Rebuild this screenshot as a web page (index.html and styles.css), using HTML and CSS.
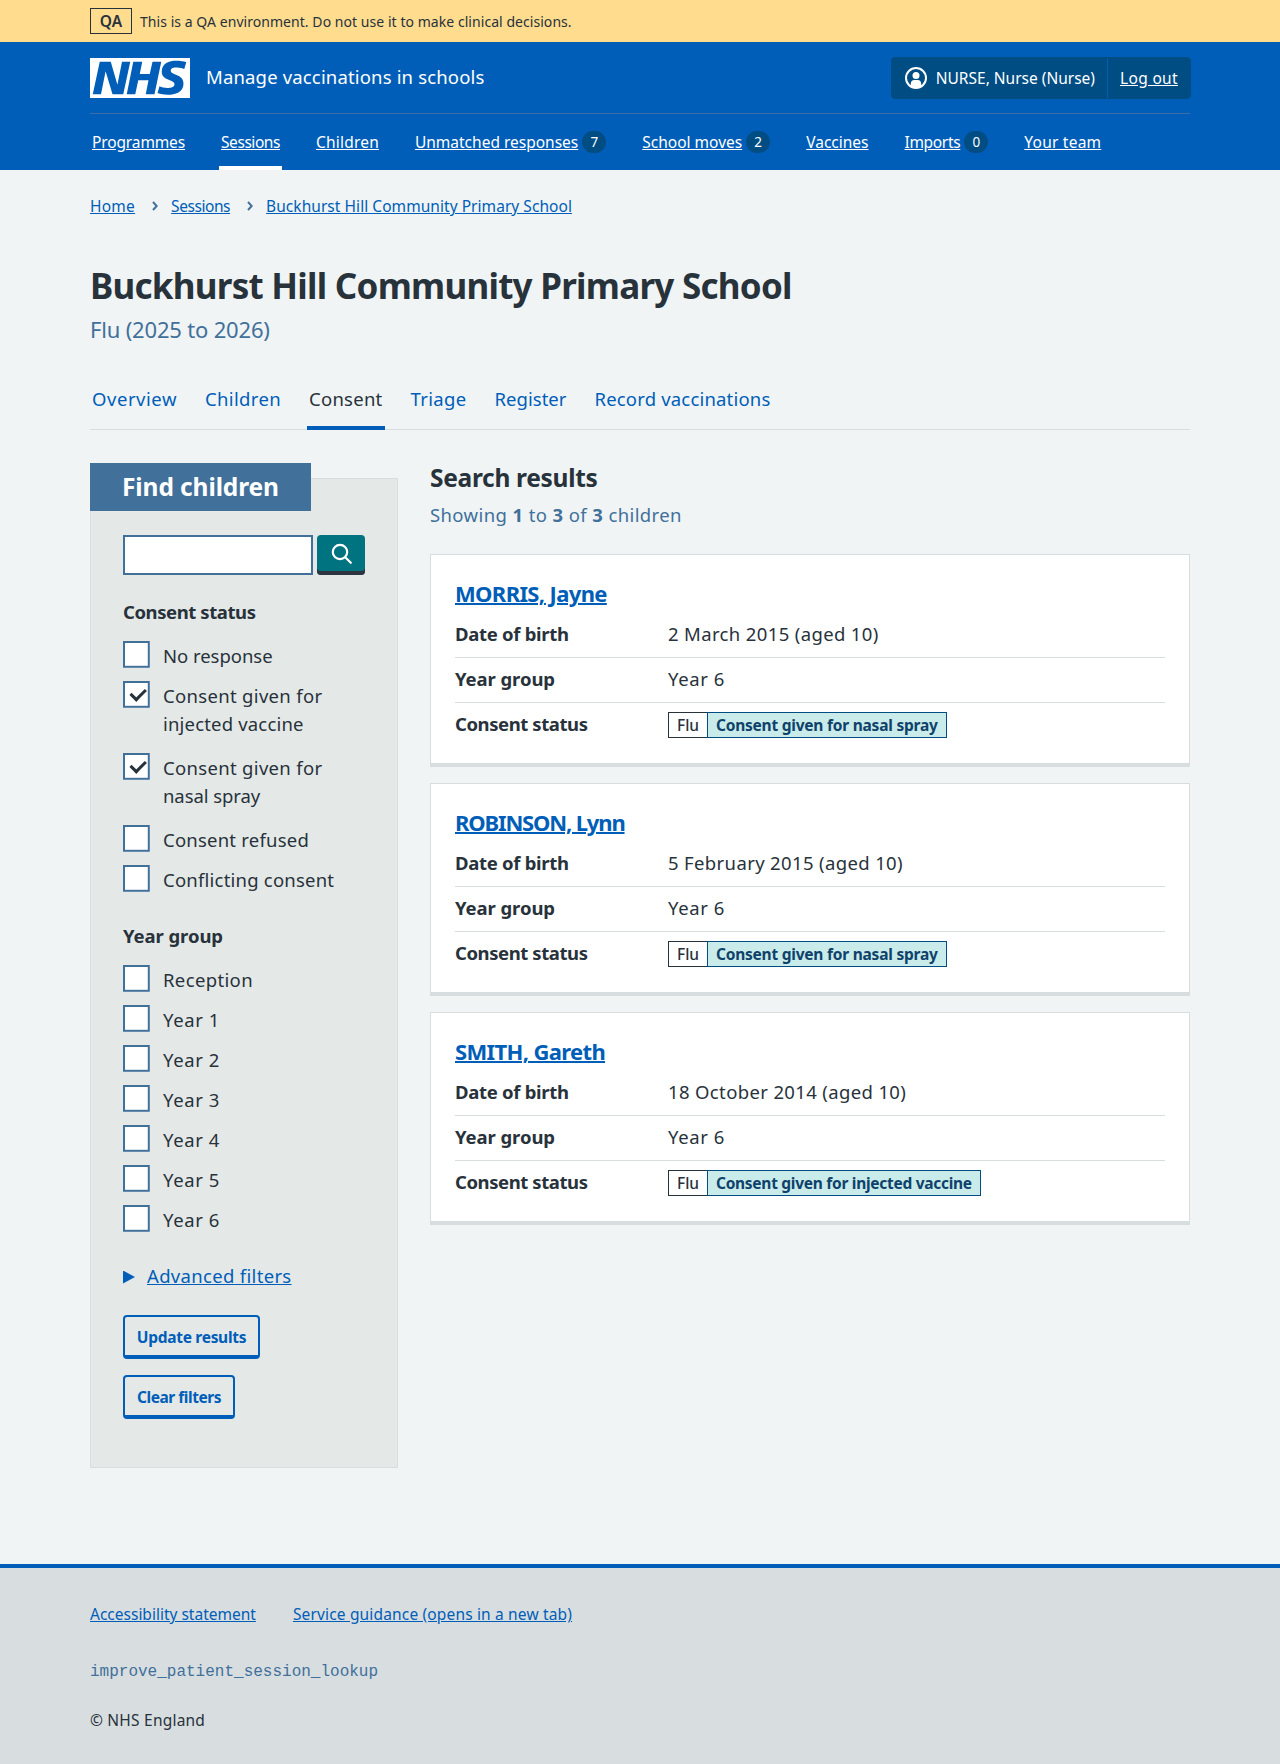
FILE: index.html
```html
<!DOCTYPE html>
<html lang="en">
<head>
<meta charset="utf-8">
<title>Buckhurst Hill Community Primary School – Manage vaccinations in schools</title>
<link rel="stylesheet" href="styles.css">
</head>
<body>
<div class="environment">
  <div class="container environment__inner">
    <strong class="environment__tag">QA</strong>
    <span class="environment__text">This is a QA environment. Do not use it to make clinical decisions.</span>
  </div>
</div>

<header class="header">
  <div class="container">
    <div class="header__top">
      <a class="header__service" href="#">
        <svg class="header__logo" viewBox="0 0 40 16" role="img" aria-label="NHS"><path fill="#fff" d="M0 0h40v16H0z"/><path fill="#005eb8" d="M3.9 1.5h4.4l2.6 9h.1l1.8-9h3.3l-2.8 13H9l-2.7-9h-.1l-1.8 9H1.1M17.3 1.5h3.6l-1 4.9h4L25 1.5h3.5l-2.7 13h-3.5l1.1-5.6h-4.1l-1.2 5.6h-3.4M37.7 4.4c-.7-.3-1.6-.6-2.9-.6-1.4 0-2.5.2-2.5 1.3 0 1.8 5.1 1.2 5.1 5.1 0 3.6-3.3 4.5-6.4 4.5-1.3 0-2.9-.3-4-.7l.8-2.7c.7.4 2.1.7 3.2.7s2.8-.2 2.8-1.5c0-2.1-5.1-1.3-5.1-5 0-3.4 2.9-4.4 5.8-4.4 1.6 0 3.1.2 4 .6"/></svg>
        <span class="header__name">Manage vaccinations in schools</span>
      </a>
      <div class="account">
        <div class="account__user">
          <svg class="account__icon" viewBox="0 0 22 22" aria-hidden="true"><circle cx="11" cy="11" r="10" fill="none" stroke="#fff" stroke-width="2"/><circle cx="11" cy="8.4" r="3.5" fill="#fff"/><path fill="#fff" d="M5.8 19.2v-2.4c0-2.3 1.4-3.8 3.4-3.8h3.6c2 0 3.4 1.5 3.4 3.8v2.4c-1.5 1.2-3.3 1.8-5.2 1.8s-3.7-.6-5.2-1.8z"/></svg>
          <span>NURSE, Nurse (Nurse)</span>
        </div>
        <a class="account__logout" href="#">Log out</a>
      </div>
    </div>
    <nav class="nav">
      <div class="nav__item nav__item--programmes"><a href="#">Programmes</a></div>
      <div class="nav__item nav__item--current"><a href="#">Sessions</a></div>
      <div class="nav__item nav__item--children"><a href="#">Children</a></div>
      <div class="nav__item"><a href="#">Unmatched responses</a><span class="nav__count">7</span></div>
      <div class="nav__item"><a href="#">School moves</a><span class="nav__count">2</span></div>
      <div class="nav__item"><a href="#">Vaccines</a></div>
      <div class="nav__item nav__item--imports"><a href="#">Imports</a><span class="nav__count">0</span></div>
      <div class="nav__item nav__item--team"><a href="#">Your team</a></div>
    </nav>
  </div>
</header>

<main class="container main">
  <nav class="breadcrumb">
    <a class="breadcrumb__home" href="#">Home</a>
    <svg class="breadcrumb__chevron" viewBox="0 0 6 10" aria-hidden="true"><path d="M1 1l3.7 4L1 9"/></svg>
    <a class="breadcrumb__sessions" href="#">Sessions</a>
    <svg class="breadcrumb__chevron" viewBox="0 0 6 10" aria-hidden="true"><path d="M1 1l3.7 4L1 9"/></svg>
    <a class="breadcrumb__school" href="#">Buckhurst Hill Community Primary School</a>
  </nav>

  <h1 class="title">Buckhurst Hill Community Primary School</h1>
  <p class="caption">Flu (2025 to 2026)</p>

  <nav class="tabs">
    <a class="tabs__item tabs__item--overview" href="#">Overview</a>
    <a class="tabs__item" href="#">Children</a>
    <a class="tabs__item tabs__item--current" href="#">Consent</a>
    <a class="tabs__item" href="#">Triage</a>
    <a class="tabs__item tabs__item--register" href="#">Register</a>
    <a class="tabs__item tabs__item--record" href="#">Record vaccinations</a>
  </nav>

  <div class="columns">
    <form class="filters">
      <h2 class="filters__title">Find children</h2>
      <div class="search">
        <input class="search__input" type="text" aria-label="Search">
        <button class="search__button" type="button" aria-label="Search">
          <svg viewBox="0 0 22 22" aria-hidden="true"><circle cx="9" cy="9" r="7.2"/><path d="M14.2 14.2l5.6 5.6"/></svg>
        </button>
      </div>

      <h3 class="filters__legend">Consent status</h3>
      <div class="options">
        <label class="option option--tight"><span class="option__box"></span>No response</label>
        <label class="option option--wrapped"><span class="option__box option__box--checked"></span>Consent given for <span class="option__tail">injected vaccine</span></label>
        <label class="option option--wrapped"><span class="option__box option__box--checked"></span>Consent given for <span class="option__tail option__tail--tight">nasal spray</span></label>
        <label class="option"><span class="option__box"></span>Consent refused</label>
        <label class="option"><span class="option__box"></span>Conflicting consent</label>
      </div>

      <h3 class="filters__legend filters__legend--next">Year group</h3>
      <div class="options options--years">
        <label class="option"><span class="option__box"></span>Reception</label>
        <label class="option"><span class="option__box"></span>Year 1</label>
        <label class="option"><span class="option__box"></span>Year 2</label>
        <label class="option"><span class="option__box"></span>Year 3</label>
        <label class="option"><span class="option__box"></span>Year 4</label>
        <label class="option"><span class="option__box"></span>Year 5</label>
        <label class="option"><span class="option__box"></span>Year 6</label>
      </div>

      <div class="advanced"><span class="advanced__arrow"></span><a href="#">Advanced filters</a></div>
      <div class="actions">
        <button class="button" type="button">Update results</button>
        <button class="button button--clear" type="button">Clear filters</button>
      </div>
    </form>

    <section class="results">
      <h2 class="results__title">Search results</h2>
      <p class="results__count">Showing <b>1</b> to <b>3</b> of <b>3</b> children</p>

      <article class="card">
        <h3 class="card__name"><a href="#">MORRIS, Jayne</a></h3>
        <dl class="summary">
          <div class="summary__row"><dt>Date of birth</dt><dd>2 March 2015 (aged 10)</dd></div>
          <div class="summary__row"><dt>Year group</dt><dd>Year 6</dd></div>
          <div class="summary__row"><dt>Consent status</dt><dd class="status"><span class="status__programme">Flu</span><span class="status__value">Consent given for nasal spray</span></dd></div>
        </dl>
      </article>

      <article class="card">
        <h3 class="card__name card__name--tight"><a href="#">ROBINSON, Lynn</a></h3>
        <dl class="summary">
          <div class="summary__row"><dt>Date of birth</dt><dd>5 February 2015 (aged 10)</dd></div>
          <div class="summary__row"><dt>Year group</dt><dd>Year 6</dd></div>
          <div class="summary__row"><dt>Consent status</dt><dd class="status"><span class="status__programme">Flu</span><span class="status__value">Consent given for nasal spray</span></dd></div>
        </dl>
      </article>

      <article class="card">
        <h3 class="card__name"><a href="#">SMITH, Gareth</a></h3>
        <dl class="summary">
          <div class="summary__row"><dt>Date of birth</dt><dd>18 October 2014 (aged 10)</dd></div>
          <div class="summary__row"><dt>Year group</dt><dd>Year 6</dd></div>
          <div class="summary__row"><dt>Consent status</dt><dd class="status"><span class="status__programme">Flu</span><span class="status__value status__value--injected">Consent given for injected vaccine</span></dd></div>
        </dl>
      </article>
    </section>
  </div>
</main>

<footer class="footer">
  <div class="container">
    <div class="footer__links">
      <a href="#">Accessibility statement</a>
      <a class="footer__guidance" href="#">Service guidance (opens in a new tab)</a>
    </div>
    <div class="footer__branch">improve_patient_session_lookup</div>
    <div class="footer__copyright">© NHS England</div>
  </div>
</footer>
</body>
</html>
```
FILE: styles.css
```css
:root {
  --blue: #005eb8;
  --dark-blue: #004d84;
  --text: #28323b;
  --secondary: #41709a;
  --border: #d8dde0;
}

* { box-sizing: border-box; }

body {
  margin: 0;
  background: #f0f4f5;
  color: var(--text);
  font: 400 18.5px/28px "Noto Sans", sans-serif;
  letter-spacing: .22px;
}

h1, h2, h3, p, dl, dd { margin: 0; }
h1, h2, h3, dt, b { font-weight: 700; }
a { color: var(--blue); }

.container { width: 1100px; margin: 0 auto; }

/* Environment banner */
.environment { background: #ffdc8e; }
.environment__inner { display: flex; align-items: center; gap: 8px; height: 42px; }
.environment__tag {
  width: 42px;
  height: 26px;
  border: 1px solid var(--text);
  font-size: 15.5px;
  font-weight: 600;
  line-height: 24px;
  text-align: center;
}
.environment__text { padding-top: 1px; font-size: 14px; line-height: 20px; letter-spacing: .05px; }

/* Header */
.header { background: var(--blue); color: #fff; font-size: 15.5px; line-height: 24px; letter-spacing: 0; }
.header a { color: #fff; }
.header__top {
  display: flex;
  justify-content: space-between;
  align-items: center;
  height: 72px;
  border-bottom: 1px solid #3a6ea5;
}
.header__service { display: flex; align-items: center; gap: 16px; padding-top: 1px; text-decoration: none; }
.header__logo { display: block; width: 100px; height: 40px; }
.header__name { padding-bottom: 2px; font-size: 18.5px; letter-spacing: .16px; }
.account {
  display: flex;
  height: 42px;
  margin: 1px -1px 0 0;
  border: 1px solid var(--dark-blue);
  border-radius: 4px;
  background: var(--dark-blue);
  line-height: 40px;
}
.account__user { display: flex; align-items: center; gap: 9px; padding: 0 12px 0 13px; }
.account__icon { width: 22px; height: 22px; }
.account__logout { width: 83px; padding-left: 12px; border-left: 1px solid var(--blue); letter-spacing: .33px; }

.nav { display: flex; gap: 32px; height: 56px; }
.nav__item { display: flex; align-items: center; gap: 4px; padding: 0 2px; }
.nav__item--programmes { letter-spacing: -.13px; }
.nav__item--current { box-shadow: inset 0 -4px #fff; letter-spacing: -.44px; }
.nav__item--children { letter-spacing: .2px; }
.nav__item--imports { letter-spacing: -.33px; }
.nav__item--team { letter-spacing: .23px; }
.nav__count {
  width: 24px;
  height: 22px;
  border-radius: 11px;
  background: var(--dark-blue);
  font-size: 13.5px;
  line-height: 22px;
  letter-spacing: 0;
  text-align: center;
}

/* Page heading */
.main { padding-bottom: 96px; }
.breadcrumb { display: flex; align-items: center; padding-top: 24px; font-size: 15.5px; line-height: 24px; letter-spacing: 0; }
.breadcrumb__home { letter-spacing: .25px; }
.breadcrumb__sessions { letter-spacing: -.44px; }
.breadcrumb__school { letter-spacing: .05px; }
.breadcrumb__chevron { width: 6px; height: 10px; margin: 0 13px 0 17px; fill: none; stroke: var(--secondary); stroke-width: 2; }
.title { margin-top: 48px; font-size: 35px; line-height: 40px; letter-spacing: -.745px; }
.caption { margin-top: 7px; color: var(--secondary); font-size: 22px; line-height: 32px; letter-spacing: -.18px; }

.tabs { display: flex; gap: 24px; height: 46px; margin-top: 39px; box-shadow: inset 0 -1px var(--border); }
.tabs__item { padding: 1px 2px 0; letter-spacing: .35px; text-decoration: none; }
.tabs__item--overview { letter-spacing: .54px; }
.tabs__item--register { letter-spacing: .02px; }
.tabs__item--record { letter-spacing: .18px; }
.tabs__item--current { color: var(--text); box-shadow: inset 0 -4px var(--blue); letter-spacing: .25px; }

.columns { display: grid; grid-template-columns: 308px 760px; gap: 32px; align-items: start; padding-top: 32px; }

/* Filter panel */
.filters {
  margin-top: 16px;
  padding: 0 32px 48px;
  border: 1px solid var(--border);
  background: #e4e9e8;
}
.filters__title {
  width: 221px;
  height: 48px;
  margin: -16px 0 24px -33px;
  padding-left: 32px;
  background: var(--secondary);
  color: #fff;
  font-size: 24.5px;
  line-height: 48px;
  letter-spacing: -.1px;
}
.search { display: flex; gap: 4px; height: 40px; }
.search__input { width: 190px; height: 40px; padding: 0 8px; border: 2px solid var(--secondary); border-radius: 0; background: #fff; }
.search__button {
  width: 48px;
  height: 40px;
  padding: 0 0 2px 1px;
  border: 0;
  border-radius: 4px;
  background: #007380;
  box-shadow: inset 0 -4px #2f3540;
  line-height: 0;
}
.search__button svg { width: 22px; height: 22px; fill: none; stroke: #fff; stroke-width: 2.2; stroke-linecap: round; }
.filters__legend { margin: 22.6px 0 16px; font-size: 18.5px; line-height: 28px; letter-spacing: -.42px; }
.filters__legend--next { margin-top: 16px; letter-spacing: -.08px; }
.option { position: relative; display: block; min-height: 40px; padding: 0 20px 0 40px; }
.option--wrapped { min-height: 72px; letter-spacing: .32px; }
.option--tight { letter-spacing: -.03px; }
.option__tail { letter-spacing: .18px; }
.option__tail--tight { letter-spacing: -.08px; }
.options--years { letter-spacing: .36px; }
.options--years .option + .option { letter-spacing: .6px; }
.option__box {
  position: absolute;
  top: -.4px;
  left: 0;
  width: 40px;
  height: 40px;
  border: 3px solid var(--secondary);
  background: #fff;
  transform: scale(.67);
  transform-origin: 0 0;
}
.option__box--checked::after {
  content: "";
  position: absolute;
  top: 7px;
  left: 7px;
  width: 20px;
  height: 10.5px;
  border: solid var(--text);
  border-width: 0 0 5px 5px;
  transform: rotate(-45deg) scale(.9);
}
.advanced { display: flex; align-items: center; gap: 12px; margin-top: 16px; letter-spacing: .32px; }
.advanced__arrow { width: 12px; height: 13px; margin-top: 3px; background: var(--blue); clip-path: polygon(0 0, 100% 50%, 0 100%); }
.actions { display: flex; flex-direction: column; align-items: flex-start; gap: 16px; margin-top: 25.4px; }
.button {
  width: 137px;
  height: 44px;
  padding: 2px 0 0;
  border: 2px solid var(--blue);
  border-bottom-width: 4px;
  border-radius: 4px;
  background: none;
  color: var(--blue);
  font: 700 15.5px/36px "Noto Sans", sans-serif;
  letter-spacing: -.3px;
  white-space: nowrap;
}
.button--clear { width: 112px; letter-spacing: -.46px; }

/* Results */
.results__title { font-size: 24.5px; line-height: 32px; letter-spacing: -.3px; }
.results__count { margin-top: 7px; color: var(--secondary); letter-spacing: .39px; }
.card {
  height: 213px;
  margin-top: 16px;
  padding: 23px 24px 24px;
  border: 1px solid var(--border);
  border-bottom-width: 4px;
  background: #fff;
}
.results__count + .card { margin-top: 25px; }
.card__name { margin-bottom: 5px; font-size: 22px; line-height: 30px; letter-spacing: -.64px; }
.card__name--tight { letter-spacing: -1.16px; }
.card__name a { text-decoration-thickness: 2px; }
.summary__row { display: flex; padding: 7px 0 9px; border-bottom: 1px solid var(--border); }
.summary__row:last-child { padding-bottom: 1px; border-bottom: 0; }
dt { width: 213px; letter-spacing: -.3px; }
dd { letter-spacing: .36px; }
.summary__row:nth-child(2) dt { letter-spacing: -.08px; }
.summary__row:nth-child(2) dd { letter-spacing: .6px; }
.summary__row:nth-child(3) dt { letter-spacing: -.42px; }
.status { display: flex; padding-top: 2px; }
.status span { height: 26px; padding: 0 8px; border: 1px solid var(--text); font-size: 15.5px; line-height: 24px; font-weight: 700; letter-spacing: 0; }
.status .status__programme { width: 39px; border-right: 0; font-weight: 500; letter-spacing: 0; }
.status .status__value { border-color: var(--dark-blue); background: #c9ecea; color: #0f426b; letter-spacing: -.23px; }
.status .status__value--injected { letter-spacing: -.28px; }

/* Footer */
.footer {
  height: 200px;
  padding-top: 34px;
  border-top: 4px solid var(--blue);
  background: #d8dde0;
  font-size: 15.5px;
  line-height: 24px;
  letter-spacing: 0;
}
.footer__links { display: flex; gap: 37px; }
.footer__guidance { letter-spacing: .16px; }
.footer__branch { margin-top: 34px; color: var(--secondary); font-family: "Liberation Mono", monospace; font-size: 16px; letter-spacing: 0; }
.footer__copyright { margin-top: 24px; letter-spacing: .22px; }
```
